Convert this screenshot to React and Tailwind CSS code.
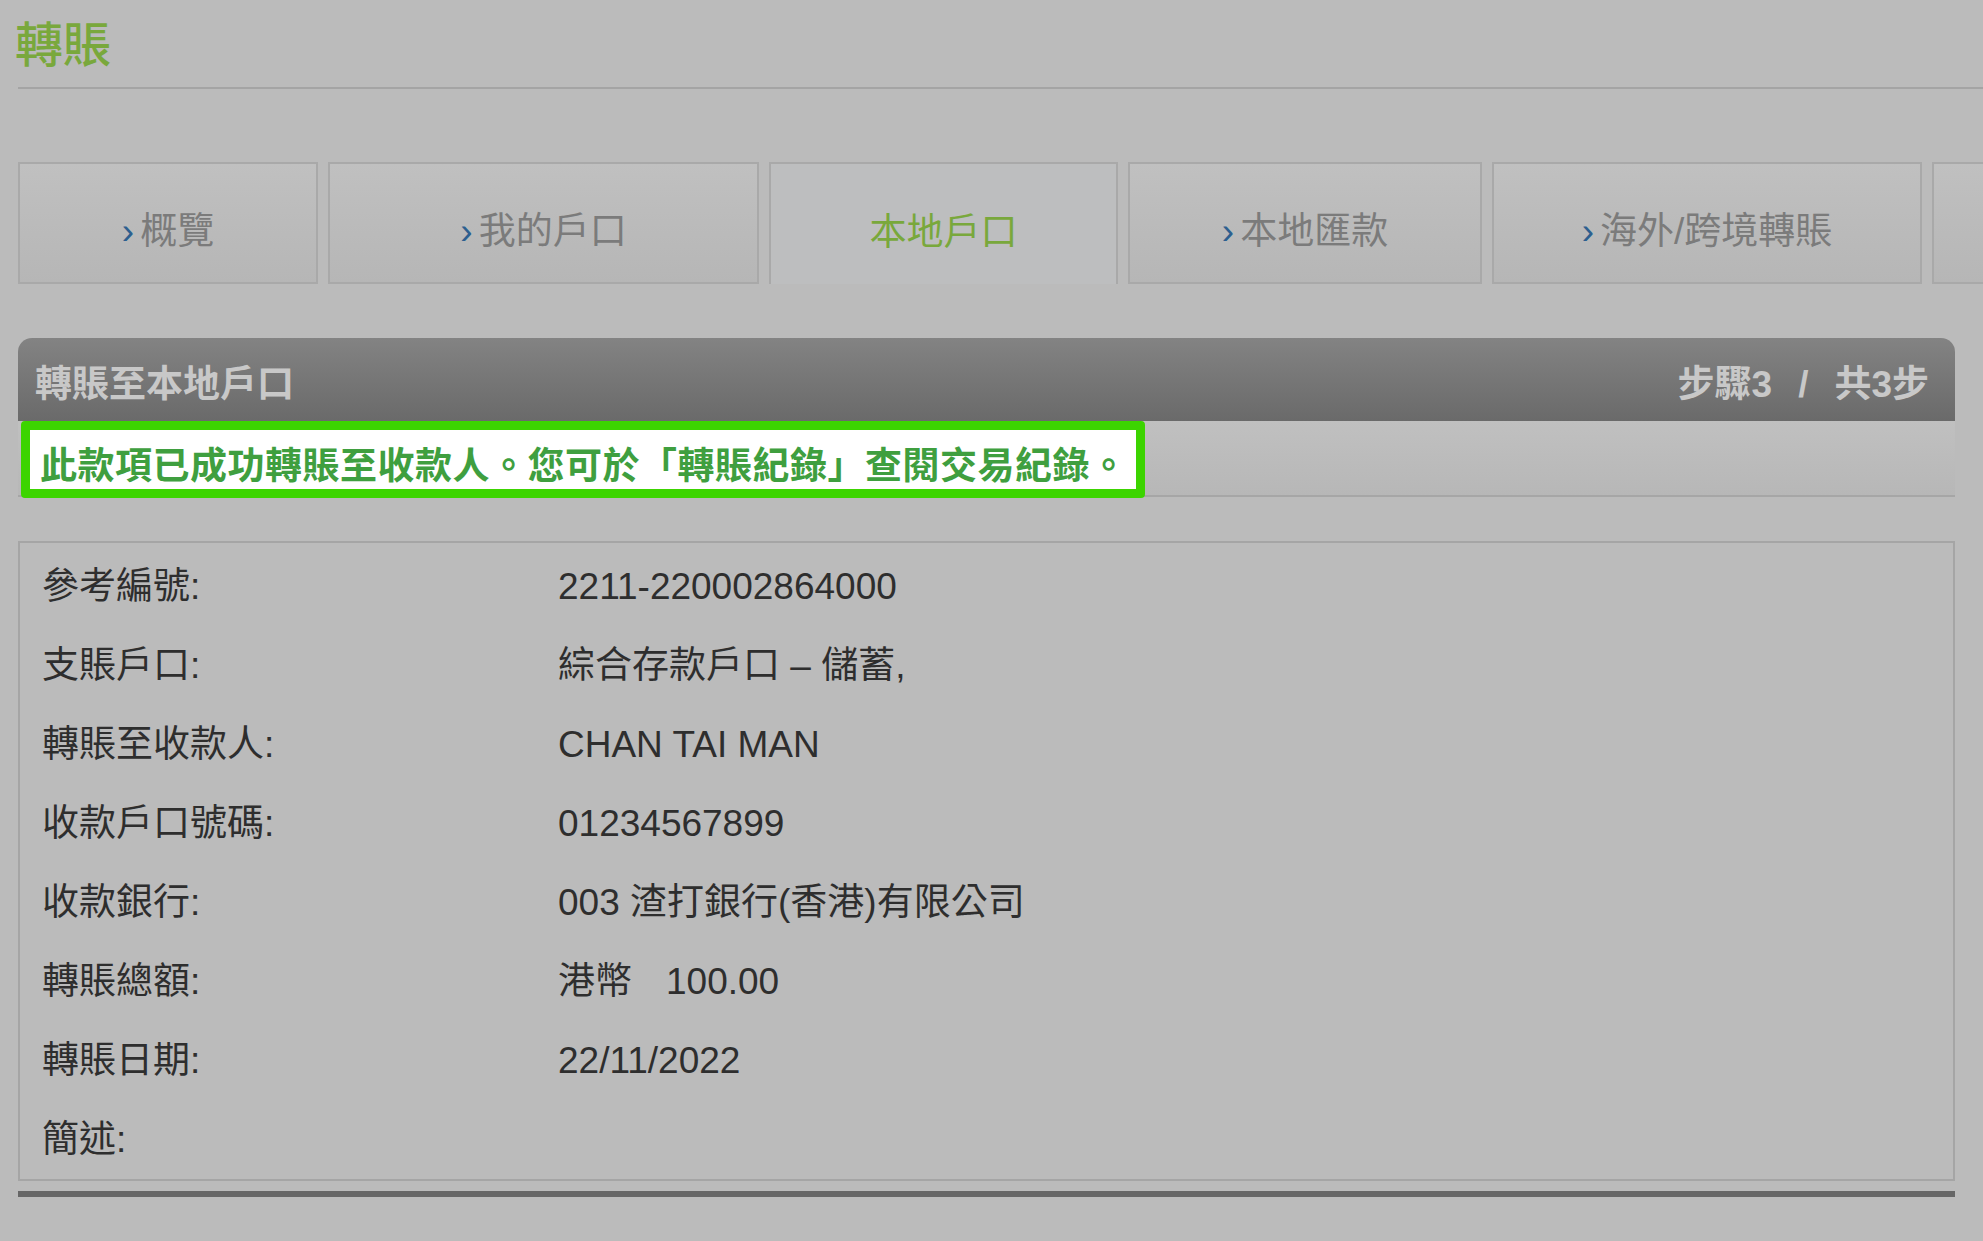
import React from 'react';

const FONT = { fontFamily: '"Liberation Sans", "Noto Sans CJK TC", sans-serif' };

const tabs = [
  { label: '概覽', w: 'w-[300px]' },
  { label: '我的戶口', w: 'w-[431px]' },
  { label: '本地戶口', w: 'w-[349px]', active: true },
  { label: '本地匯款', w: 'w-[354px]' },
  { label: '海外/跨境轉賬', w: 'w-[430px]' },
  { label: '', w: 'w-[300px]' },
];

const rows = [
  ['參考編號:', '2211-220002864000'],
  ['支賬戶口:', '綜合存款戶口 – 儲蓄,'],
  ['轉賬至收款人:', 'CHAN TAI MAN'],
  ['收款戶口號碼:', '01234567899'],
  ['收款銀行:', '003 渣打銀行(香港)有限公司'],
  ['轉賬總額:', <>港幣<span className="ml-[34px]">100.00</span></>],
  ['轉賬日期:', '22/11/2022'],
  ['簡述:', ''],
];

export default function App() {
  return (
    <div className="min-h-screen w-full overflow-hidden bg-[#bbbbbb]" style={FONT}>
      {/* Page title */}
      <div className="pl-[15px] pt-[22px] pb-[17px]">
        <h1 className="text-[48px] leading-none font-medium text-[#79a83c]">轉賬</h1>
      </div>
      <div className="ml-[18px] h-[2px] bg-[#a4a4a4]" />

      {/* Tabs */}
      <div className="mt-[73px] ml-[18px] flex gap-[10px]">
        {tabs.map((t, i) => (
          <div
            key={i}
            className={`${t.w} h-[122px] shrink-0 flex items-center justify-center pt-[16px] border-2 border-[#a9a9a9] text-[37px] leading-none ${
              t.active
                ? 'border-b-0 bg-[#bdbebf] text-[#79a83c]'
                : 'bg-gradient-to-b from-[#c0c0c0] to-[#b6b6b6] text-[#7b7b7b]'
            }`}
          >
            {!t.active && t.label && <span className="mr-[6px] text-[#2d5f8f]">›</span>}
            {t.label}
          </div>
        ))}
      </div>

      <div className="ml-[18px] mr-[28px] mt-[54px]">
        {/* Panel header */}
        <div className="h-[83px] rounded-t-[14px] bg-gradient-to-b from-[#838383] to-[#6a6a6a] flex items-center justify-between pt-[10px] pl-[17px] pr-[26px] text-[37px] leading-none font-bold text-[#c8c8c8]">
          <span>轉賬至本地戶口</span>
          <span className="flex items-center">
            <span>步驟3</span>
            <span className="mx-[26px]">/</span>
            <span>共3步</span>
          </span>
        </div>

        {/* Message row */}
        <div className="h-[76px] flex bg-gradient-to-b from-[#c0c0c0] to-[#b7b7b7] border-b-2 border-[#a6a6a6] pl-[3px]">
          <div className="h-[77px] flex items-center border-[9px] border-[#3cd400] rounded-[4px] bg-white pl-[10px] pr-[8px] pt-[14px] text-[37px] leading-none font-bold tracking-[0.5px] text-[#3f9f3f]">
            此款項已成功轉賬至收款人。您可於「轉賬紀錄」查閱交易紀錄。
          </div>
        </div>

        {/* Details */}
        <div className="mt-[44px] border-2 border-[#a5a5a5] pl-[22px] pt-[4px]">
          {rows.map(([label, value], i) => (
            <div key={i} className="h-[79px] flex items-center text-[37px] leading-none text-[#2e2e2e]">
              <div className="w-[516px] shrink-0">{label}</div>
              <div>{value}</div>
            </div>
          ))}
        </div>

        <div className="mt-[10px] h-[6px] bg-[#666666]" />
      </div>
    </div>
  );
}
